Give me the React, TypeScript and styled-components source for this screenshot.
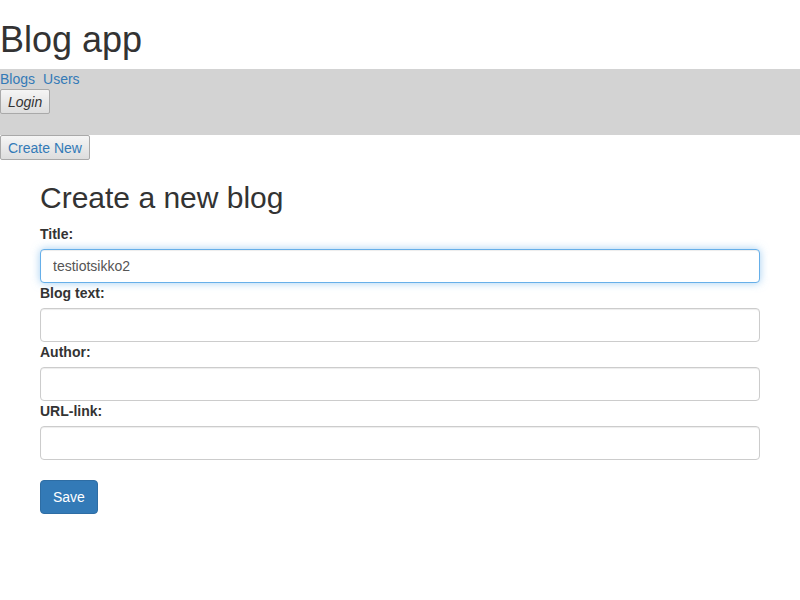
import type { FC } from "react";
import styled, { createGlobalStyle, css } from "styled-components";

const GlobalStyle = createGlobalStyle`
  html, body {
    margin: 0;
    padding: 0;
    background: #fff;
  }
  body {
    font-family: "Liberation Sans", Helvetica, Arial, sans-serif;
    font-size: 14px;
    line-height: 1.42857143;
    color: #333;
  }
  * {
    box-sizing: border-box;
  }
`;

const Title = styled.h1`
  font-size: 36px;
  font-weight: 500;
  line-height: 1.1;
  margin: 20px 0 9px;
`;

const NavBar = styled.div`
  background: lightgray;
  padding-bottom: 21px;
`;

const NavLinks = styled.div`
  display: flex;
  height: 20px;
`;

const NavLink = styled.a`
  color: #337ab7;
  text-decoration: none;
  margin-right: 8px;
  cursor: pointer;
`;

const NativeButton = styled.button<{ $italic?: boolean; $link?: boolean }>`
  display: block;
  font-family: "Liberation Sans", Helvetica, Arial, sans-serif;
  font-size: 14px;
  line-height: 17px;
  height: 25px;
  padding: 4px 7px 2px;
  margin: 0;
  border: 1px solid #a9a9a9;
  border-radius: 2px;
  background: linear-gradient(#f5f5f5, #dddddd);
  color: #333;
  cursor: pointer;
  ${(p) => p.$italic && css`font-style: italic;`}
  ${(p) => p.$link && css`color: #337ab7;`}
`;

const Container = styled.div`
  width: 750px;
  margin: 0 auto;
  padding: 0 15px;
`;

const FormTitle = styled.h2`
  font-size: 30px;
  font-weight: 500;
  line-height: 1.1;
  margin: 21px 0 10px;
`;

const Label = styled.label`
  display: inline-block;
  font-weight: bold;
  margin-bottom: 5px;
`;

const Input = styled.input<{ $focused?: boolean }>`
  display: block;
  width: 100%;
  height: 34px;
  padding: 6px 12px;
  font-family: inherit;
  font-size: 14px;
  line-height: 1.42857143;
  color: #555;
  background: #fff;
  border: 1px solid #ccc;
  border-radius: 4px;
  box-shadow: inset 0 1px 1px rgba(0, 0, 0, 0.075);
  outline: 0;
  ${(p) =>
    p.$focused &&
    css`
      border-color: #66afe9;
      box-shadow: inset 0 1px 1px rgba(0, 0, 0, 0.075),
        0 0 8px rgba(102, 175, 233, 0.6);
    `}
`;

const SaveButton = styled.button`
  margin-top: 20px;
  display: inline-block;
  padding: 6px 12px;
  font-family: inherit;
  font-size: 14px;
  line-height: 1.42857143;
  color: #fff;
  background: #337ab7;
  border: 1px solid #2e6da4;
  border-radius: 4px;
  cursor: pointer;
`;

const fields = [
  { id: "title", label: "Title:", value: "testiotsikko2" },
  { id: "text", label: "Blog text:", value: "" },
  { id: "author", label: "Author:", value: "" },
  { id: "url", label: "URL-link:", value: "" },
];

const Field: FC<{ id: string; label: string; value: string; focused?: boolean }> = ({
  id,
  label,
  value,
  focused,
}) => (
  <div>
    <Label htmlFor={id}>{label}</Label>
    <Input id={id} defaultValue={value} $focused={focused} />
  </div>
);

export default function App() {
  return (
    <>
      <GlobalStyle />
      <Title>Blog app</Title>
      <NavBar>
        <NavLinks>
          <NavLink>Blogs</NavLink>
          <NavLink>Users</NavLink>
        </NavLinks>
        <NativeButton $italic>Login</NativeButton>
      </NavBar>
      <NativeButton $link>Create New</NativeButton>
      <Container>
        <FormTitle>Create a new blog</FormTitle>
        <form onSubmit={(e) => e.preventDefault()}>
          {fields.map((f, i) => (
            <Field key={f.id} {...f} focused={i === 0} />
          ))}
          <SaveButton type="submit">Save</SaveButton>
        </form>
      </Container>
    </>
  );
}
